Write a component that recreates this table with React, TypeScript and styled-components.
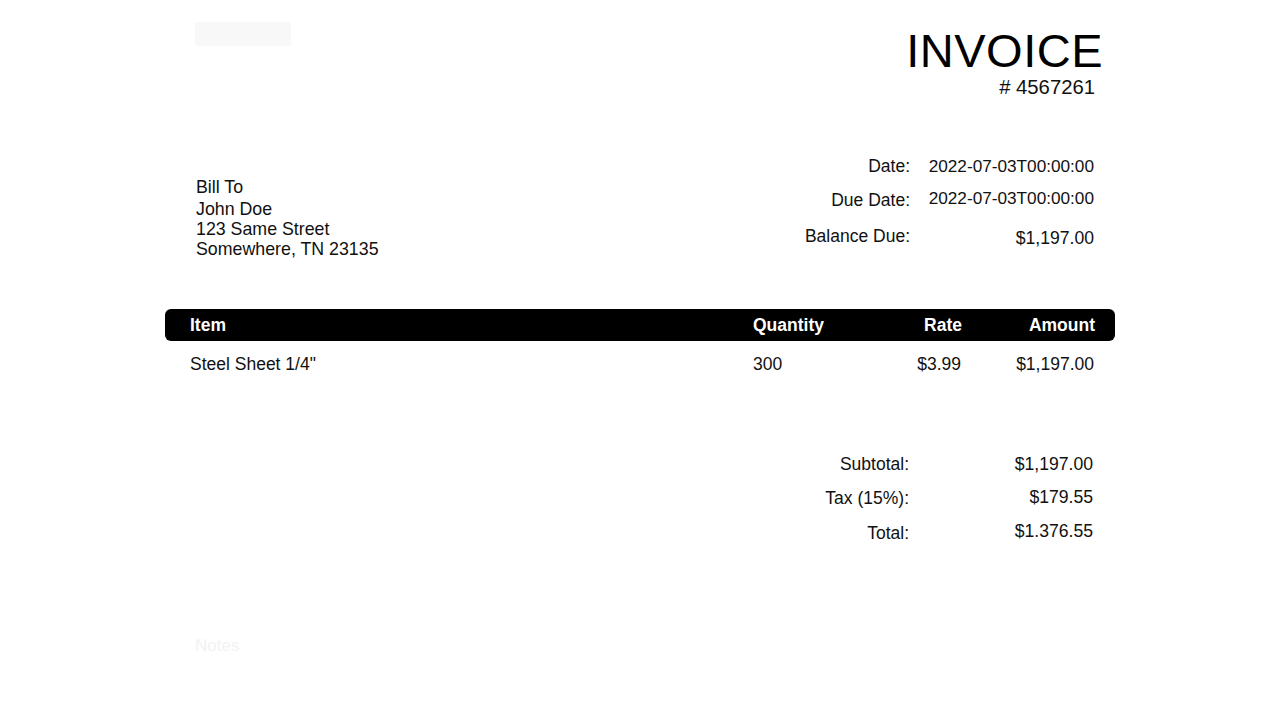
import styled, { createGlobalStyle } from 'styled-components'

const GlobalStyle = createGlobalStyle`
  html, body {
    margin: 0;
    padding: 0;
    background: #ffffff;
  }
  body {
    font-family: "Liberation Sans", Arial, sans-serif;
    color: #111111;
  }
`

interface ILineItem {
  readonly name: string
  readonly quantity: number
  readonly rate: string
  readonly amount: string
}

const items: ILineItem[] = [
  { name: 'Steel Sheet 1/4"', quantity: 300, rate: '$3.99', amount: '$1,197.00' },
]

const Page = styled.div`
  width: 950px;
  margin: 0 auto;
  display: flex;
  flex-direction: column;
`

const Header = styled.header`
  display: flex;
  justify-content: space-between;
  align-items: flex-start;
  padding: 22px 12px 0 30px;
`

const Logo = styled.div`
  width: 96px;
  height: 24px;
  border-radius: 3px;
  background: #f8f8f8;
`

const TitleBlock = styled.div`
  display: flex;
  flex-direction: column;
  align-items: flex-end;
`

const Title = styled.h1`
  margin: 5px 0 0;
  font-size: 47px;
  font-weight: 400;
  line-height: 1;
  letter-spacing: 0.5px;
  color: #000000;
`

const Number = styled.div`
  margin: 1px 8px 0 0;
  font-size: 20.3px;
  line-height: 1.2;
  color: #111111;
`

const InfoRow = styled.section`
  display: flex;
  justify-content: space-between;
  align-items: flex-start;
  padding: 50px 21px 0 31px;
`

const BillTo = styled.div`
  display: flex;
  flex-direction: column;
  padding-top: 28px;
  font-size: 17.8px;
  line-height: 20px;
`

const BillLabel = styled.div`
  margin-bottom: 2px;
`

const SummaryGrid = styled.div<{ $rowHeight: number }>`
  display: grid;
  grid-template-columns: auto 166px;
  column-gap: 18px;
  grid-auto-rows: ${({ $rowHeight }) => $rowHeight}px;
  align-items: center;
`

const SummaryLabel = styled.div<{ $shift?: number }>`
  text-align: right;
  font-size: 17.5px;
  color: #111111;
  transform: translateY(${({ $shift }) => $shift ?? 0}px);
`

const SummaryValue = styled.div<{ $small?: boolean; $shift?: number }>`
  text-align: right;
  font-size: ${({ $small }) => ($small ? 17.2 : 17.6)}px;
  color: #111111;
  transform: translateY(${({ $shift }) => $shift ?? 0}px);
`

const Table = styled.div`
  margin-top: 50px;
  display: flex;
  flex-direction: column;
`

const TableRow = styled.div<{ $head?: boolean }>`
  display: grid;
  grid-template-columns: 1fr 90px 120px 132px;
  align-items: center;
  padding: 0 20px 0 25px;
  height: ${({ $head }) => ($head ? 32 : 47)}px;
  border-radius: ${({ $head }) => ($head ? 6 : 0)}px;
  background: ${({ $head }) => ($head ? '#000000' : 'transparent')};
  color: ${({ $head }) => ($head ? '#ffffff' : '#111111')};
  font-size: 17.5px;
  font-weight: ${({ $head }) => ($head ? 700 : 400)};
`

const Cell = styled.div<{ $align?: 'left' | 'right'; $inset?: number }>`
  text-align: ${({ $align }) => $align ?? 'left'};
  padding-right: ${({ $inset }) => $inset ?? 0}px;
`

const Totals = styled.section`
  display: flex;
  justify-content: flex-end;
  padding: 59px 22px 0 0;
`

const Ghost = styled.div`
  color: #f2f2f2;
  font-size: 17px;
`

const Notes = styled.section`
  padding: 87px 0 0 30px;
`

export default function App() {
  return (
    <>
      <GlobalStyle />
      <Page>
        <Header>
          <Logo />
          <TitleBlock>
            <Title>INVOICE</Title>
            <Number># 4567261</Number>
          </TitleBlock>
        </Header>

        <InfoRow>
          <BillTo>
            <BillLabel>Bill To</BillLabel>
            <div>John Doe</div>
            <div>123 Same Street</div>
            <div>Somewhere, TN 23135</div>
          </BillTo>
          <SummaryGrid $rowHeight={35}>
            <SummaryLabel>Date:</SummaryLabel>
            <SummaryValue $small>2022-07-03T00:00:00</SummaryValue>
            <SummaryLabel $shift={-1}>Due Date:</SummaryLabel>
            <SummaryValue $small $shift={-3}>2022-07-03T00:00:00</SummaryValue>
            <SummaryLabel>Balance Due:</SummaryLabel>
            <SummaryValue $shift={2}>$1,197.00</SummaryValue>
          </SummaryGrid>
        </InfoRow>

        <Table>
          <TableRow $head>
            <Cell>Item</Cell>
            <Cell>Quantity</Cell>
            <Cell $align="right" $inset={1}>Rate</Cell>
            <Cell $align="right">Amount</Cell>
          </TableRow>
          {items.map((item) => (
            <TableRow key={item.name}>
              <Cell>{item.name}</Cell>
              <Cell>{item.quantity}</Cell>
              <Cell $align="right" $inset={2}>{item.rate}</Cell>
              <Cell $align="right" $inset={1}>{item.amount}</Cell>
            </TableRow>
          ))}
        </Table>

        <Totals>
          <SummaryGrid $rowHeight={34}>
            <SummaryLabel>Subtotal:</SummaryLabel>
            <SummaryValue>$1,197.00</SummaryValue>
            <SummaryLabel>Tax (15%):</SummaryLabel>
            <SummaryValue $shift={-1}>$179.55</SummaryValue>
            <SummaryLabel $shift={1}>Total:</SummaryLabel>
            <SummaryValue $shift={-1}>$1.376.55</SummaryValue>
          </SummaryGrid>
        </Totals>

        <Notes>
          <Ghost>Notes</Ghost>
        </Notes>
      </Page>
    </>
  )
}
